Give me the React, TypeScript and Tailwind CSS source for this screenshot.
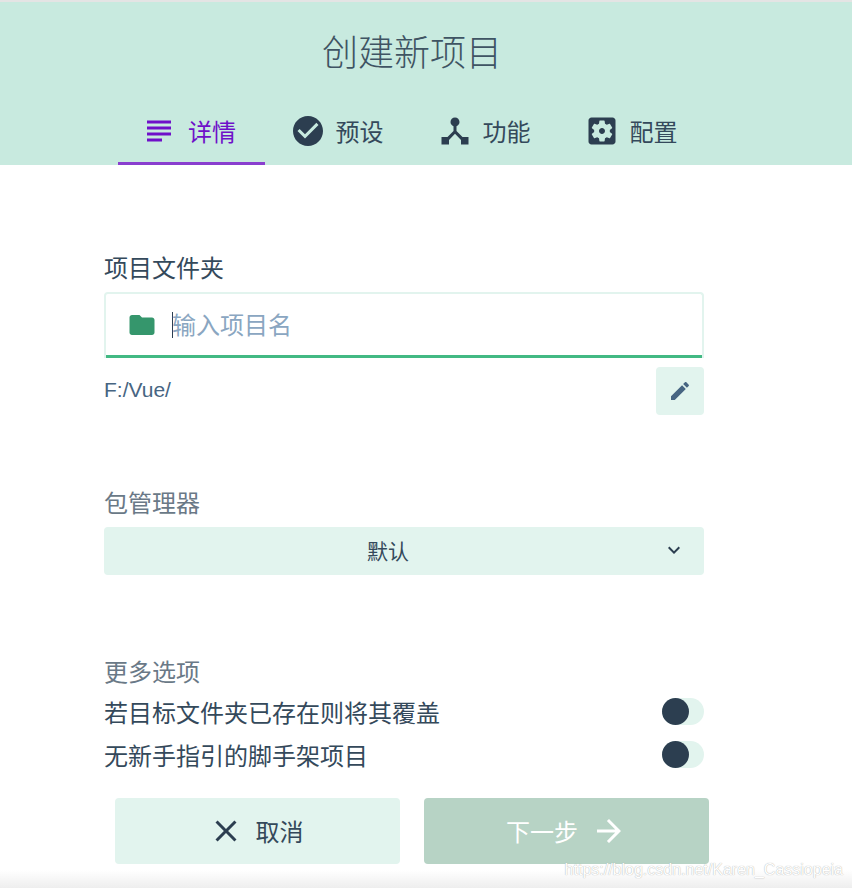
import React from "react";

const cjk = "font-['Noto_Sans_CJK_SC','Noto_Sans',sans-serif]";

const paths = {
  subject: "M14 17H4v2h10v-2zm6-8H4v2h16V9zM4 15h16v-2H4v2zM4 5v2h16V5H4z",
  check: "M12 2C6.48 2 2 6.48 2 12s4.48 10 10 10 10-4.48 10-10S17.52 2 12 2zm-2 15l-5-5 1.41-1.41L10 14.17l7.59-7.59L19 8l-9 9z",
  hub: "M17 16l-4-4V8.82C14.16 8.4 15 7.3 15 6c0-1.66-1.34-3-3-3S9 4.34 9 6c0 1.3.84 2.4 2 2.82V12l-4 4H3v5h5v-3.05l4-4.2 4 4.2V21h5v-5h-4z",
  settings: "M12 10c-1.1 0-2 .9-2 2s.9 2 2 2 2-.9 2-2-.9-2-2-2zm7-7H5c-1.11 0-2 .9-2 2v14c0 1.1.89 2 2 2h14c1.11 0 2-.9 2-2V5c0-1.1-.89-2-2-2zm-1.75 9c0 .23-.02.46-.05.68l1.48 1.16c.13.11.17.3.08.45l-1.4 2.42c-.09.15-.27.21-.43.15l-1.74-.7c-.36.28-.76.51-1.18.69l-.26 1.85c-.03.17-.18.3-.35.3h-2.8c-.17 0-.32-.13-.35-.29l-.26-1.85c-.43-.18-.82-.41-1.18-.69l-1.74.7c-.16.06-.34 0-.43-.15l-1.4-2.42c-.09-.15-.05-.34.08-.45l1.48-1.16c-.03-.23-.05-.46-.05-.69 0-.23.02-.46.05-.68l-1.48-1.16c-.13-.11-.17-.3-.08-.45l1.4-2.42c.09-.15.27-.21.43-.15l1.74.7c.36-.28.76-.51 1.18-.69l.26-1.85c.03-.17.18-.3.35-.3h2.8c.17 0 .32.13.35.29l.26 1.85c.43.18.82.41 1.18.69l1.74-.7c.16-.06.34 0 .43.15l1.4 2.42c.09.15.05.34-.08.45l-1.48 1.16c.03.23.05.46.05.69z",
  folder: "M10 4H4c-1.1 0-1.99.9-1.99 2L2 18c0 1.1.9 2 2 2h16c1.1 0 2-.9 2-2V8c0-1.1-.9-2-2-2h-8l-2-2z",
  edit: "M3 17.25V21h3.75L17.81 9.94l-3.75-3.75L3 17.25zM20.71 7.04c.39-.39.39-1.02 0-1.41l-2.34-2.34c-.39-.39-1.02-.39-1.41 0l-1.83 1.83 3.75 3.75 1.83-1.83z",
  close: "M19 6.41L17.59 5 12 10.59 6.41 5 5 6.41 10.59 12 5 17.59 6.41 19 12 13.41 17.59 19 19 17.59 13.41 12z",
  arrow: "M12 4l-1.41 1.41L16.17 11H4v2h12.17l-5.58 5.59L12 20l8-8z",
  expand: "M16.59 8.59L12 13.17 7.41 8.59 6 10l6 6 6-6z",
};

function Icon({ d, className }: { d: string; className: string }) {
  return (
    <svg viewBox="0 0 24 24" fill="currentColor" className={className}>
      <path d={d} />
    </svg>
  );
}

const tabs = [
  { label: "详情", icon: paths.subject, active: true },
  { label: "预设", icon: paths.check },
  { label: "功能", icon: paths.hub },
  { label: "配置", icon: paths.settings },
];

function Toggle() {
  return (
    <div className="w-[42px] h-[27px] rounded-full bg-[#e2f4ee]">
      <div className="w-[27px] h-[27px] rounded-full bg-[#2c3e50]" />
    </div>
  );
}

export default function App() {
  return (
    <div className={`relative w-[852px] h-[888px] overflow-hidden bg-white text-[#34495b] ${cjk}`}>
      {/* Header */}
      <header className="h-[165px] bg-[#c8eadf] border-t-2 border-[#e4e4e4]">
        <h1 className="pt-[23px] pl-[322px] text-[36px] leading-[50px] font-light text-[#3f5463]">创建新项目</h1>
        <nav className="flex mt-[35px] ml-[118px]">
          {tabs.map((tab) => (
            <div
              key={tab.label}
              className={
                tab.active
                  ? "w-[147px] h-[55px] flex items-center justify-center gap-[11px] pb-[10px] pr-[6px] border-b-[3px] border-[#8a3fcf] text-[#6f10c9]"
                  : "w-[147px] h-[55px] flex items-center justify-center gap-[10px] pb-[10px] pr-[4px] border-b-[3px] border-transparent"
              }
            >
              <Icon d={tab.icon} className={tab.active ? "w-[36px] h-[36px] shrink-0" : "w-[36px] h-[36px] shrink-0 text-[#2c3e50]"} />
              <span className="text-[24px] leading-[32px]">{tab.label}</span>
            </div>
          ))}
        </nav>
      </header>

      {/* Form */}
      <main className="ml-[104px] w-[600px]">
        <section className="pt-[86px]">
          <label className="block text-[24px] leading-[32px]">项目文件夹</label>
          <div className="mt-[9px] h-[66px] flex items-center pl-[21px] pb-[3px] gap-[15px] rounded-t border-2 border-b-0 border-[#e2f4ee] shadow-[inset_0_-3px_0_#42b983]">
            <Icon d={paths.folder} className="w-[30px] h-[30px] text-[#35966c] shrink-0" />
            <div className="relative h-[26px] w-[1px] bg-[#2c3e50]">
              <span className="absolute left-0 -top-[3px] whitespace-nowrap text-[24px] leading-[30px] text-[#8aa6c1]">输入项目名</span>
            </div>
          </div>
          <div className="mt-[9px] flex items-center justify-between">
            <span className="font-['Liberation_Sans',sans-serif] text-[21px] leading-[28px] pb-[2px] text-[#476582]">F:/Vue/</span>
            <div className="w-[48px] h-[48px] rounded bg-[#e2f4ee] flex items-center justify-center">
              <Icon d={paths.edit} className="w-[24px] h-[24px] text-[#476582]" />
            </div>
          </div>
        </section>

        <section className="pt-[71px]">
          <label className="block text-[24px] leading-[32px] text-[#6a7987]">包管理器</label>
          <div className="relative mt-[9px] h-[48px] rounded bg-[#e2f4ee] flex items-center justify-center pr-[32px] text-[21px]">
            默认
            <Icon d={paths.expand} className="absolute right-[18px] top-[11px] w-[24px] h-[24px] text-[#2c3e50]" />
          </div>
        </section>

        <section className="pt-[80px]">
          <label className="block text-[24px] leading-[32px] text-[#6a7987]">更多选项</label>
          <div className="mt-[3px] flex items-center justify-between h-[43px]">
            <span className="text-[24px]">若目标文件夹已存在则将其覆盖</span>
            <Toggle />
          </div>
          <div className="flex items-center justify-between h-[43px]">
            <span className="text-[24px]">无新手指引的脚手架项目</span>
            <Toggle />
          </div>
        </section>
      </main>

      {/* Actions */}
      <footer className="flex gap-[24px] ml-[115px] mt-[22px]">
        <button className="w-[285px] h-[66px] rounded bg-[#e2f4ee] flex items-center justify-center gap-[12px] pr-[4px] text-[24px]">
          <Icon d={paths.close} className="w-[36px] h-[36px] text-[#2c3e50]" />
          取消
        </button>
        <button className="w-[285px] h-[66px] rounded bg-[#b7d3c5] text-white flex items-center justify-center gap-[13px] text-[24px]">
          下一步
          <Icon d={paths.arrow} className="w-[36px] h-[36px]" />
        </button>
      </footer>

      {/* Window edge fade and watermark */}
      <div className="absolute left-0 right-0 bottom-0 h-[18px] bg-gradient-to-b from-white to-[#eeeeee]" />
      <span className="absolute right-[9px] bottom-[6px] font-['Liberation_Sans',sans-serif] text-[16px] leading-[24px] text-white [text-shadow:0_0_1px_#9a9a9a]">
        https://blog.csdn.net/Karen_Cassiopeia
      </span>
    </div>
  );
}
